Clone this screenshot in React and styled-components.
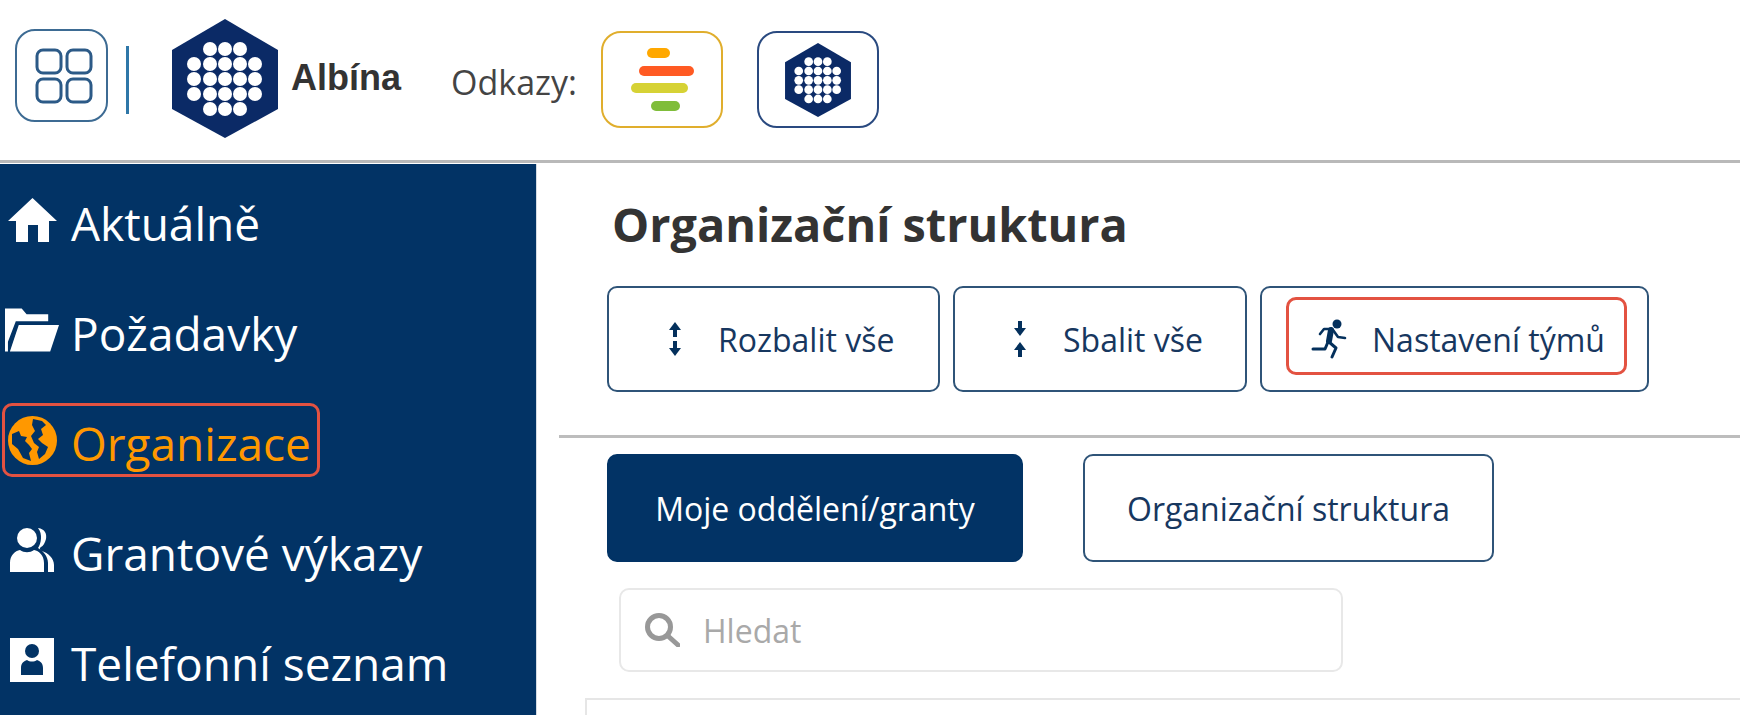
import styled, { createGlobalStyle } from "styled-components";

const NAVY = "#023365";
const FONT = `"Open Sans", "Noto Sans", sans-serif`;

const GlobalStyle = createGlobalStyle`
  html, body {
    margin: 0;
    padding: 0;
    background: #fff;
    font-family: ${FONT};
    overflow: hidden;
  }
  * { box-sizing: border-box; }
`;

const Page = styled.div`
  width: 1740px;
  height: 715px;
  display: flex;
  flex-direction: column;
  overflow: hidden;
`;

const Header = styled.header`
  height: 164px;
  flex: none;
  display: flex;
  align-items: flex-start;
  padding-left: 15px;
  border-bottom: 1px solid #fff;
  box-shadow: inset 0 -4px 0 -1px #b9b9b9;
`;

const AppButton = styled.div`
  width: 93px;
  height: 93px;
  margin-top: 29px;
  padding-left: 4px;
  display: flex;
  align-items: center;
  justify-content: center;
  border: 2px solid #3d6b93;
  border-radius: 20px;
`;

const HeaderDivider = styled.div`
  width: 3px;
  height: 68px;
  margin: 46px 43px 0 18px;
  background: #2f77a8;
`;

const LogoBox = styled.div`
  margin-top: 19px;
  display: flex;
`;

const BrandName = styled.div`
  margin: 53px 50px 0 13px;
  font-family: "Liberation Sans", Arial, sans-serif;
  font-weight: 700;
  font-size: 36px;
  line-height: 50px;
  color: #333;
`;

const LinksLabel = styled.div`
  margin: 57px 24px 0 0;
  font-size: 34px;
  line-height: 50px;
  color: #444;
`;

const LinkBox = styled.a`
  width: 122px;
  height: 97px;
  margin: 31px 34px 0 0;
  padding-left: ${(p) => p.$shift || 0}px;
  display: flex;
  align-items: center;
  justify-content: center;
  border: 2px solid ${(p) => p.$color};
  border-radius: 20px;
`;

const Body = styled.div`
  flex: 1;
  display: flex;
  min-height: 0;
`;

const Sidebar = styled.nav`
  width: 537px;
  flex: none;
  padding: 19px 0 0 2px;
  display: flex;
  flex-direction: column;
  align-items: flex-start;
  gap: 36px;
  background: ${NAVY};
  border-right: 1px solid #d5dbe2;
`;

const NavItem = styled.a`
  height: 74px;
  display: flex;
  align-items: center;
  padding: 5px 6px 0 0;
  border: 3px solid ${(p) => (p.$active ? "#e35241" : "transparent")};
  border-radius: 10px;
  color: ${(p) => (p.$active ? "#ff9800" : "#fff")};
  font-size: 46px;
  white-space: nowrap;
`;

const NavIcon = styled.span`
  width: 54px;
  margin: -5px 12px 0 0;
  flex: none;
  display: flex;
  justify-content: center;
`;

const Main = styled.main`
  flex: 1;
  min-width: 0;
  display: flex;
  flex-direction: column;
`;

const Title = styled.h1`
  margin: 30px 0 0 75px;
  height: 60px;
  font-size: 46.8px;
  line-height: 60px;
  font-weight: 700;
  color: #333;
`;

const ActionRow = styled.div`
  margin: 32px 0 0 70px;
  display: flex;
  gap: 13px;
`;

const ActionButton = styled.button`
  width: ${(p) => p.$width}px;
  height: 106px;
  padding: 0 0 0 ${(p) => p.$pad}px;
  display: flex;
  align-items: center;
  background: #fff;
  border: 2px solid #2f5478;
  border-radius: 10px;
  font-family: inherit;
  font-size: 32px;
  color: #17375f;
  white-space: nowrap;
`;

const Highlight = styled.span`
  width: 341px;
  height: 78px;
  margin-bottom: 6px;
  padding: 6px 0 0 19px;
  display: flex;
  align-items: center;
  border: 3px solid #e35241;
  border-radius: 10px;
`;

const ActionIcon = styled.span`
  width: ${(p) => p.$width}px;
  margin-right: ${(p) => p.$gap}px;
  flex: none;
  display: flex;
  justify-content: center;
  color: #04305c;
`;

const Separator = styled.hr`
  margin: 43px 0 0 22px;
  height: 3px;
  border: 0;
  background: #bdbdbd;
`;

const TabRow = styled.div`
  margin: 16px 0 0 70px;
  display: flex;
  gap: 60px;
`;

const Tab = styled.button`
  width: ${(p) => p.$width}px;
  height: 108px;
  background: ${(p) => (p.$active ? NAVY : "#fff")};
  border: 2px solid ${(p) => (p.$active ? NAVY : "#2f5478")};
  border-radius: 10px;
  font-family: inherit;
  font-size: 32px;
  color: ${(p) => (p.$active ? "#fff" : "#17375f")};
  white-space: nowrap;
`;

const SearchBox = styled.label`
  width: 724px;
  height: 84px;
  margin: 26px 0 0 82px;
  padding-left: 24px;
  display: flex;
  align-items: center;
  gap: 23px;
  border: 2px solid #e8e8e8;
  border-radius: 10px;
`;

const SearchInput = styled.input`
  flex: 1;
  min-width: 0;
  border: 0;
  outline: 0;
  padding: 0;
  font-family: inherit;
  font-size: 32px;
  &::placeholder {
    color: #a9a9a9;
    opacity: 1;
  }
`;

const TreePanel = styled.div`
  flex: 1;
  margin: 26px 0 0 48px;
  border-top: 2px solid #e6e6e6;
  border-left: 2px solid #e6e6e6;
`;

function HexLogo({ width, height }) {
  const rows = [
    { y: 30, xs: [38, 53, 68] },
    { y: 45, xs: [22, 38, 53, 68, 83] },
    { y: 60, xs: [22, 38, 53, 68, 83] },
    { y: 75, xs: [22, 38, 53, 68, 83] },
    { y: 90, xs: [38, 53, 68] },
  ];
  return (
    <svg width={width} height={height} viewBox="0 0 106 119">
      <polygon points="53,0 106,31 106,90 53,119 0,90 0,31" fill="#0b2a66" />
      {rows.map((row) =>
        row.xs.map((x) => <circle key={`${x}-${row.y}`} cx={x} cy={row.y} r="7" fill="#fff" />)
      )}
    </svg>
  );
}

function GridIcon() {
  return (
    <svg width="58" height="56" viewBox="0 0 58 56" fill="none" stroke="#2c5a87" strokeWidth="3">
      <rect x="2" y="2" width="24" height="23" rx="6" />
      <rect x="32" y="2" width="24" height="23" rx="6" />
      <rect x="2" y="31" width="24" height="23" rx="6" />
      <rect x="32" y="31" width="24" height="23" rx="6" />
    </svg>
  );
}

function BarsLogo() {
  return (
    <svg width="64" height="64" viewBox="0 0 64 64">
      <rect x="16" y="0" width="23" height="10" rx="5" fill="#ffa800" />
      <rect x="8" y="18" width="55" height="10" rx="5" fill="#ff5a23" />
      <rect x="0" y="35" width="57" height="10" rx="5" fill="#d6d235" />
      <rect x="20" y="53" width="29" height="10" rx="5" fill="#7fbd3a" />
    </svg>
  );
}

function HomeIcon() {
  return (
    <svg width="49" height="44" viewBox="0 0 49 44" fill="#fff">
      <path d="M24.5 0L49 23H41V44H30V27H20V44H8V23H0Z" />
    </svg>
  );
}

function FolderIcon() {
  return (
    <svg width="55" height="44" viewBox="0 0 55 44" fill="#fff">
      <path d="M0 0H17L22 6H44V13H11L3 34V44H0Z" />
      <path d="M14 17H55L46 44H5Z" />
    </svg>
  );
}

function GlobeIcon() {
  return (
    <svg width="49" height="49" viewBox="0 0 49 49">
      <circle cx="24.5" cy="24.5" r="24.5" fill="#ff9800" />
      <path d="M25 3L34 5L38 9L33 13L35 19L30 23L34 27L40 31L37 38L31 43L29 36L31 31L26 27L23 20L27 15L24 9Z" fill={NAVY} />
      <path d="M4 18L11 15L13 20L19 21L17 25L21 29L24 33L21 37L23 45L15 42L10 33L4 28Z" fill={NAVY} />
    </svg>
  );
}

function UsersIcon() {
  return (
    <svg width="44" height="44" viewBox="0 0 44 44" fill="#fff">
      <circle cx="17" cy="10" r="10" />
      <path d="M0 44V35C0 27 5 23 10 22C14 25 20 25 24 22C29 23 34 27 34 35V44Z" />
      <path d="M28 0C35 1 37 6 36 11C35 15 33 18 31 19C29 20 30 22 32 23C38 25 44 30 44 37V44H38V35C38 28 33 23 28 20C31 16 33 6 28 0Z" />
    </svg>
  );
}

function ContactIcon() {
  return (
    <svg width="44" height="44" viewBox="0 0 44 44">
      <rect width="44" height="44" fill="#fff" />
      <circle cx="22" cy="13" r="7" fill={NAVY} />
      <path d="M11 37V30C11 25 14 23 17 22C20 24 24 24 27 22C30 23 33 25 33 30V37Z" fill={NAVY} />
    </svg>
  );
}

function ExpandIcon() {
  return (
    <svg width="14" height="34" viewBox="0 0 14 34" fill="currentColor">
      <path d="M7 0L13 8H9V15H5V8H1Z" />
      <path d="M7 34L13 26H9V19H5V26H1Z" />
    </svg>
  );
}

function CollapseIcon() {
  return (
    <svg width="14" height="36" viewBox="0 0 14 36" fill="currentColor">
      <path d="M7 15L13 7H9V0H5V7H1Z" />
      <path d="M7 21L13 29H9V36H5V29H1Z" />
    </svg>
  );
}

function RunnerIcon() {
  return (
    <svg width="38" height="40" viewBox="0 0 38 40" fill="none" stroke="currentColor" strokeLinecap="round" strokeLinejoin="round">
      <circle cx="27" cy="5" r="4.5" fill="currentColor" stroke="none" />
      <path d="M21 11L19 22" strokeWidth="6" />
      <path d="M22 10H14L10 15" strokeWidth="2.6" />
      <path d="M23 11L28 18L35 19" strokeWidth="2.6" />
      <path d="M18 23L15 30H3" strokeWidth="3" />
      <path d="M19 23L26 29L22 38" strokeWidth="3" />
    </svg>
  );
}

function SearchIcon() {
  return (
    <svg width="35" height="34" viewBox="0 0 35 34" fill="none" stroke="#989898" strokeLinecap="round">
      <circle cx="14" cy="14" r="11.5" strokeWidth="5" />
      <path d="M23 23L33 32" strokeWidth="5" />
    </svg>
  );
}

export default function App() {
  const navItems = [
    { label: "Aktuálně", icon: <HomeIcon /> },
    { label: "Požadavky", icon: <FolderIcon /> },
    { label: "Organizace", icon: <GlobeIcon />, active: true },
    { label: "Grantové výkazy", icon: <UsersIcon /> },
    { label: "Telefonní seznam", icon: <ContactIcon /> },
  ];

  return (
    <Page>
      <GlobalStyle />
      <Header>
        <AppButton>
          <GridIcon />
        </AppButton>
        <HeaderDivider />
        <LogoBox>
          <HexLogo width={106} height={119} />
        </LogoBox>
        <BrandName>Albína</BrandName>
        <LinksLabel>Odkazy:</LinksLabel>
        <LinkBox $color="#e0ae2d" $shift={3}>
          <BarsLogo />
        </LinkBox>
        <LinkBox $color="#2a4a80">
          <HexLogo width={66} height={74} />
        </LinkBox>
      </Header>
      <Body>
        <Sidebar>
          {navItems.map((item) => (
            <NavItem key={item.label} $active={item.active}>
              <NavIcon>{item.icon}</NavIcon>
              {item.label}
            </NavItem>
          ))}
        </Sidebar>
        <Main>
          <Title>Organizační struktura</Title>
          <ActionRow>
            <ActionButton $width={333} $pad={59}>
              <ActionIcon $width={14} $gap={36}>
                <ExpandIcon />
              </ActionIcon>
              Rozbalit vše
            </ActionButton>
            <ActionButton $width={294} $pad={58}>
              <ActionIcon $width={14} $gap={36}>
                <CollapseIcon />
              </ActionIcon>
              Sbalit vše
            </ActionButton>
            <ActionButton $width={389} $pad={24}>
              <Highlight>
                <ActionIcon $width={42} $gap={22}>
                  <RunnerIcon />
                </ActionIcon>
                Nastavení týmů
              </Highlight>
            </ActionButton>
          </ActionRow>
          <Separator />
          <TabRow>
            <Tab $active $width={416}>Moje oddělení/granty</Tab>
            <Tab $width={411}>Organizační struktura</Tab>
          </TabRow>
          <SearchBox>
            <SearchIcon />
            <SearchInput placeholder="Hledat" />
          </SearchBox>
          <TreePanel />
        </Main>
      </Body>
    </Page>
  );
}
